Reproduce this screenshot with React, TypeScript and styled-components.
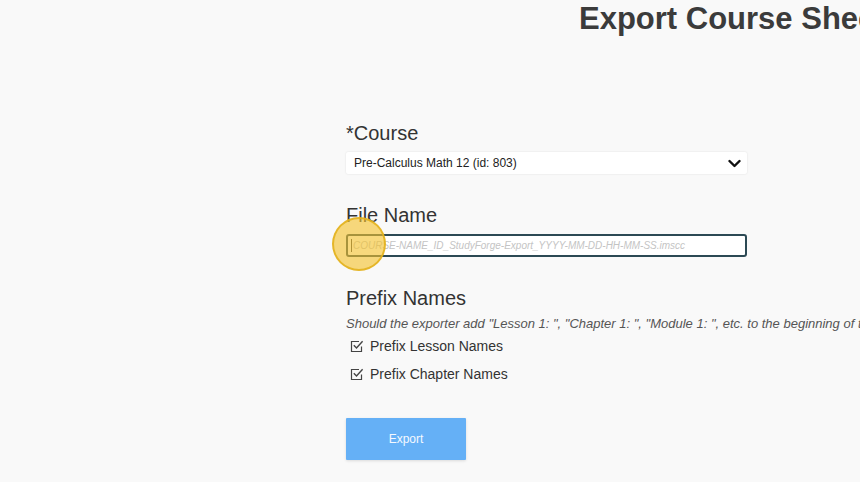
import React from 'react'
import styled, { createGlobalStyle } from 'styled-components'

const GlobalStyle = createGlobalStyle`
  html, body {
    margin: 0;
    padding: 0;
    background: #f9f9f9;
    overflow: hidden;
  }
  body {
    font-family: 'Liberation Sans', Arial, Helvetica, sans-serif;
    color: #333;
  }
`

const Page = styled.div`
  width: 860px;
  height: 482px;
  overflow: hidden;
  position: relative;
`

const Title = styled.h1`
  margin: 1px 0 0 579px;
  font-size: 31px;
  line-height: 36px;
  font-weight: 700;
  color: #3b3b3b;
  white-space: nowrap;
`

const Form = styled.div`
  margin: 84px 0 0 346px;
  width: 401px;
  display: flex;
  flex-direction: column;
`

const Label = styled.div<{ $mt?: number }>`
  margin-top: ${({ $mt }) => $mt ?? 0}px;
  font-size: 20px;
  line-height: 24px;
  color: #333;
  margin-bottom: 7px;
`

const SelectBox = styled.div`
  height: 22px;
  background: #fff;
  box-shadow: 0 0 2px rgba(0, 0, 0, 0.12);
  border-radius: 2px;
  display: flex;
  align-items: center;
  justify-content: space-between;
  padding: 0 6px 0 8px;
  font-size: 12px;
  color: #222;
`

const InputWrap = styled.div`
  position: relative;
`

const TextInput = styled.div`
  height: 19px;
  background: #fff;
  border: 2px solid #2c4954;
  border-radius: 3px;
  display: flex;
  align-items: center;
  padding-left: 3px;
  font-size: 10px;
  font-style: italic;
  color: #c4c4c4;
  white-space: nowrap;
  overflow: hidden;
`

const Caret = styled.span`
  display: inline-block;
  width: 1px;
  height: 13px;
  background: #444;
  margin-right: 1px;
`

const ClickMarker = styled.div`
  position: absolute;
  left: -14px;
  top: -17px;
  width: 50px;
  height: 50px;
  border-radius: 50%;
  background: rgba(243, 194, 45, 0.62);
  border: 2px solid rgba(226, 176, 26, 0.85);
  pointer-events: none;
`

const Description = styled.div`
  font-size: 13px;
  line-height: 16px;
  font-style: italic;
  color: #555;
  white-space: nowrap;
  margin-top: -1px;
`

const CheckRow = styled.label`
  height: 28px;
  display: flex;
  align-items: center;
  gap: 6px;
  padding-left: 4px;
  font-size: 14px;
  color: #333;
  white-space: nowrap;
`

const ExportButton = styled.button`
  margin-top: 30px;
  width: 120px;
  height: 42px;
  border: none;
  border-radius: 1px;
  background: #65b0f6;
  box-shadow: 0 1px 3px rgba(0, 0, 0, 0.12);
  color: #f4f9ff;
  font-family: 'Liberation Sans', Arial, sans-serif;
  font-size: 12px;
`

function Chevron() {
  return (
    <svg width="13" height="9" viewBox="0 0 13 9">
      <polyline points="1.5,2 6.5,7 11.5,2" fill="none" stroke="#111" strokeWidth="2.4" strokeLinecap="round" strokeLinejoin="round" />
    </svg>
  )
}

function CheckSquare() {
  return (
    <svg width="14" height="14" viewBox="0 0 14 14">
      <path d="M9 2.5H1.5v10h10V7.5" fill="none" stroke="#444" strokeWidth="1.2" />
      <polyline points="3.8,6.3 6.5,9 12.6,2.2" fill="none" stroke="#444" strokeWidth="1.4" />
    </svg>
  )
}

export default function App() {
  return (
    <Page>
      <GlobalStyle />
      <Title>Export Course Sheet</Title>
      <Form>
        <Label>*Course</Label>
        <SelectBox>
          <span>Pre-Calculus Math 12 (id: 803)</span>
          <Chevron />
        </SelectBox>

        <Label $mt={29}>File Name</Label>
        <InputWrap>
          <TextInput>
            <Caret />
            COURSE-NAME_ID_StudyForge-Export_YYYY-MM-DD-HH-MM-SS.imscc
          </TextInput>
          <ClickMarker />
        </InputWrap>

        <Label $mt={29}>Prefix Names</Label>
        <Description>
          Should the exporter add "Lesson 1: ", "Chapter 1: ", "Module 1: ", etc. to the beginning of the names?
        </Description>
        <CheckRow>
          <CheckSquare />
          Prefix Lesson Names
        </CheckRow>
        <CheckRow>
          <CheckSquare />
          Prefix Chapter Names
        </CheckRow>

        <ExportButton>Export</ExportButton>
      </Form>
    </Page>
  )
}
